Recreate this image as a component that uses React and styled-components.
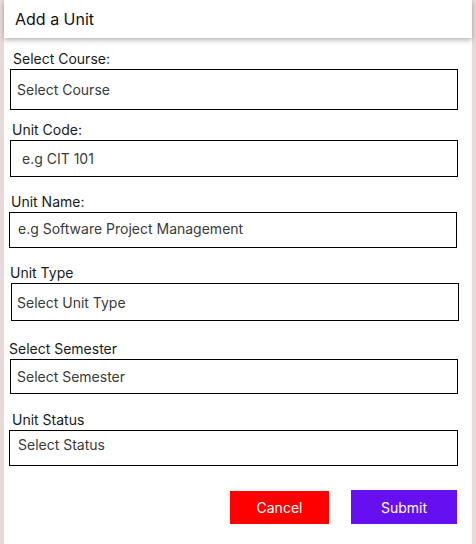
import React from "react";
import styled, { createGlobalStyle } from "styled-components";

const GlobalStyle = createGlobalStyle`
  body {
    margin: 0;
    background-color: #e9dada;
    font-family: Inter, "Noto Sans", sans-serif;
  }
`;

const Card = styled.div`
  width: 468px;
  min-height: 544px;
  margin: 0 4px;
  background-color: #ffffff;
`;

const Header = styled.div`
  height: 38px;
  display: flex;
  align-items: center;
  padding-left: 11px;
  background-color: #ffffff;
  box-shadow: 0 2px 5px rgba(0, 0, 0, 0.3);
  font-size: 16px;
  color: #111;
`;

const Form = styled.form`
  display: flex;
  flex-direction: column;
  padding: 12px 15px 0 0;
`;

const Field = styled.div`
  display: flex;
  flex-direction: column;
  margin-top: ${(p) => p.$top}px;
`;

const Label = styled.label`
  font-size: 14px;
  line-height: 17px;
  color: #1a1a1a;
  margin-left: ${(p) => p.$indent}px;
  margin-bottom: 2px;
`;

const boxStyle = `
  box-sizing: border-box;
  border: 1px solid #000;
  border-radius: 0;
  background: #fff;
  font-family: Inter, "Noto Sans", sans-serif;
  font-size: 14px;
  font-weight: 400;
  color: #3a3a3a;
  outline: none;
  margin: 0;
`;

const Input = styled.input`
  ${boxStyle}
  margin-left: ${(p) => p.$indent}px;
  width: ${(p) => p.$width}px;
  height: ${(p) => p.$height}px;
  padding: 0 0 ${(p) => p.$lift || 0}px ${(p) => p.$pad}px;
  &::placeholder {
    color: #3a3a3a;
    opacity: 1;
  }
`;

const Select = styled.select`
  ${boxStyle}
  appearance: none;
  margin-left: ${(p) => p.$indent}px;
  width: ${(p) => p.$width}px;
  height: ${(p) => p.$height}px;
  padding: 0 0 0 ${(p) => p.$pad}px;
`;

const TextBox = styled.textarea`
  ${boxStyle}
  resize: none;
  margin-left: ${(p) => p.$indent}px;
  width: ${(p) => p.$width}px;
  height: ${(p) => p.$height}px;
  padding: 5px 0 0 ${(p) => p.$pad}px;
  line-height: 17px;
  &::placeholder {
    color: #3a3a3a;
    opacity: 1;
  }
`;

const Actions = styled.div`
  display: flex;
  justify-content: flex-end;
  align-items: flex-end;
  gap: 22px;
  margin-top: 24px;
`;

const Button = styled.button`
  border: none;
  width: ${(p) => p.$width}px;
  height: ${(p) => p.$height}px;
  background-color: ${(p) => p.$bg};
  color: #fff;
  font-family: Inter, "Noto Sans", sans-serif;
  font-size: 14px;
  cursor: pointer;
`;

export default function App() {
  return (
    <>
      <GlobalStyle />
      <Card>
        <Header>Add a Unit</Header>
        <Form onSubmit={(e) => e.preventDefault()}>
          <Field $top={0}>
            <Label $indent={9}>Select Course:</Label>
            <Select $indent={6} $width={448} $height={41} $pad={6} defaultValue="">
              <option value="">Select Course</option>
            </Select>
          </Field>
          <Field $top={11}>
            <Label $indent={8}>Unit Code:</Label>
            <Input $indent={6} $width={448} $height={37} $pad={11} placeholder="e.g CIT 101" />
          </Field>
          <Field $top={16}>
            <Label $indent={7}>Unit Name:</Label>
            <Input $indent={5} $width={448} $height={36} $pad={8} $lift={4} placeholder="e.g Software Project Management" />
          </Field>
          <Field $top={16}>
            <Label $indent={6}>Unit Type</Label>
            <Select $indent={7} $width={448} $height={38} $pad={5} defaultValue="">
              <option value="">Select Unit Type</option>
            </Select>
          </Field>
          <Field $top={19}>
            <Label $indent={5}>Select Semester</Label>
            <Select $indent={6} $width={448} $height={35} $pad={6} defaultValue="">
              <option value="">Select Semester</option>
            </Select>
          </Field>
          <Field $top={17}>
            <Label $indent={8}>Unit Status</Label>
            <TextBox $indent={5} $width={449} $height={36} $pad={8} placeholder="Select Status" />
          </Field>
          <Actions>
            <Button type="button" $width={99} $height={33} $bg="#ff0000">Cancel</Button>
            <Button type="submit" $width={106} $height={34} $bg="#6610f2">Submit</Button>
          </Actions>
        </Form>
      </Card>
    </>
  );
}
